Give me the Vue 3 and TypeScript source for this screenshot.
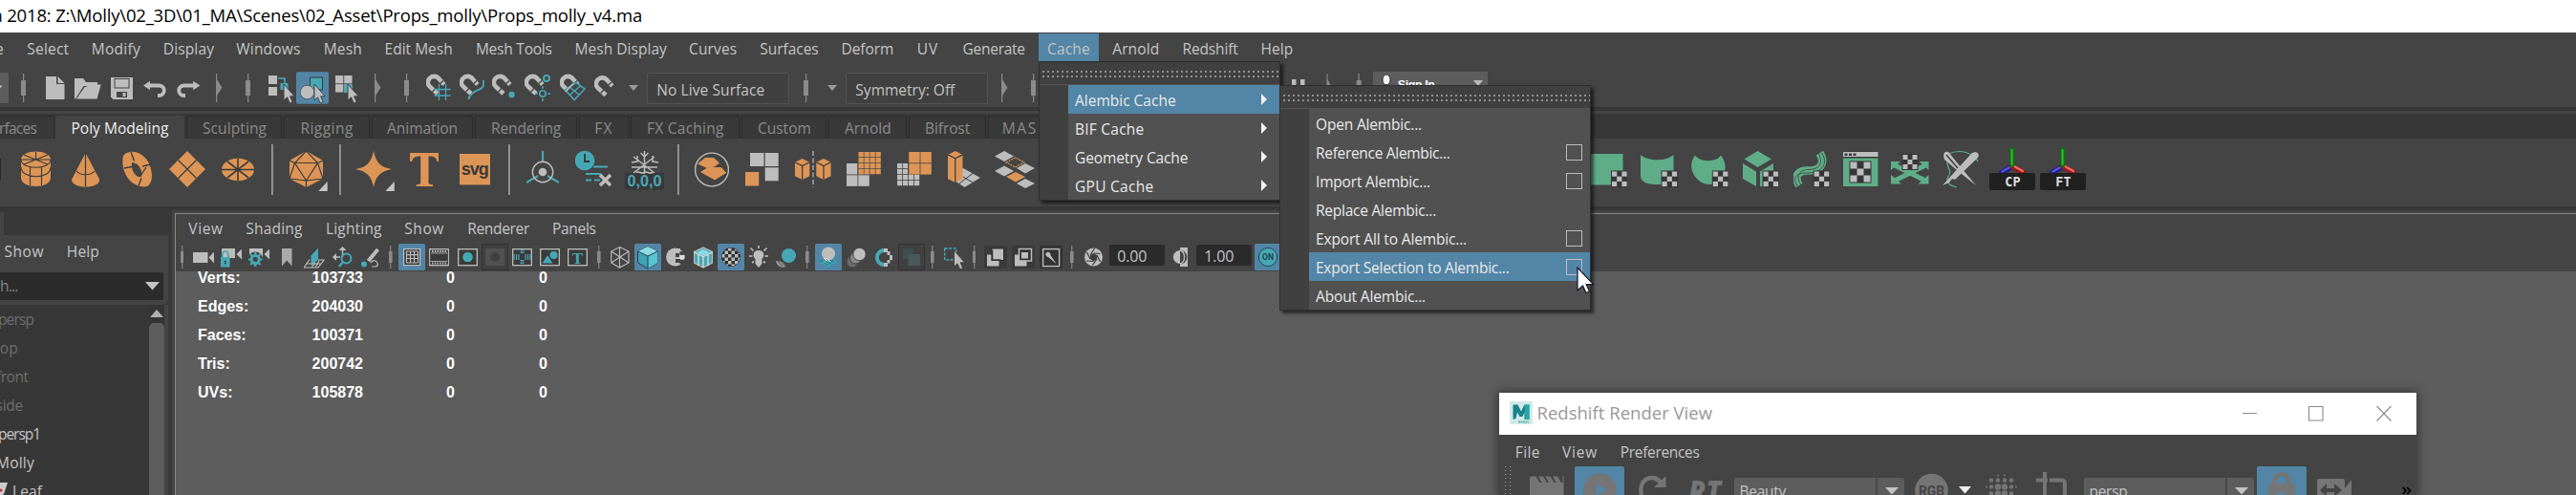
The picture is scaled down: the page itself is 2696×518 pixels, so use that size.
<script setup lang="ts">
type Slot = { id: string; w: number; m: number }

// [name, left edge, right edge] along a row -> widths and leading gaps
function flow(items: [string, number, number][], origin = 0, bleed = 0): Slot[] {
  let end = origin
  return items.map(([id, l, r]) => {
    const left = l - bleed
    const w = r - l + bleed * 2
    const m = left - end
    end = left + w
    return { id, w, m }
  })
}
const box = (s: Slot) => ({ width: s.w + 'px', marginLeft: s.m + 'px' })

// spreads the letters of a label over a given width
const vFit = {
  mounted(el: HTMLElement, b: { value: number }) {
    const n = (el.textContent ?? '').length
    const natural = el.getBoundingClientRect().width
    if (n) el.style.letterSpacing = (b.value - natural) / n + 'px'
  },
}

const mainMenu = flow([
  ['e', -4, 3.8], ['Select', 29.3, 71.3], ['Modify', 96.8, 146], ['Display', 171.8, 223.1], ['Windows', 248.3, 313.7],
  ['Mesh', 339.9, 377.8], ['Edit Mesh', 403.6, 472.8], ['Mesh Tools', 499, 576.8], ['Mesh Display', 602.7, 697],
  ['Curves', 722.2, 770.4], ['Surfaces', 796.5, 855.8], ['Deform', 881.6, 934.6], ['UV', 960.8, 981.5],
  ['Generate', 1008.7, 1072], ['Cache', 1097.2, 1140], ['Arnold', 1165.4, 1212.6], ['Redshift', 1238.7, 1294.9],
  ['Help', 1320.7, 1352.7],
], 0, 1)

const panelMenu = flow([
  ['View', 198.3, 232.7], ['Shading', 258.3, 315.7], ['Lighting', 342, 398.7], ['Show', 424.3, 464],
  ['Renderer', 490.3, 553], ['Panels', 579, 622.7],
], 184, 1)

const renderMenu = flow([['File', 1586.8, 1611], ['View', 1636, 1671], ['Preferences', 1696.8, 1777.5]], 1569, 1)
const outlinerMenu = flow([['Show', 5.4, 45.2], ['Help', 70.8, 103]], 0, 1)

const tabs = [
  { t: 'rfaces', l: -2, r: 56.8, w: 39 }, { t: 'Poly Modeling', l: 57.9, r: 193, w: 102, on: true },
  { t: 'Sculpting', l: 195.5, r: 295.5, w: 67 }, { t: 'Rigging', l: 297.5, r: 386.8, w: 55.5 },
  { t: 'Animation', l: 388.8, r: 495.4, w: 74 }, { t: 'Rendering', l: 497.5, r: 603.7, w: 73 },
  { t: 'FX', l: 605.8, r: 658.3, w: 19.5 }, { t: 'FX Caching', l: 660.4, r: 774.4, w: 80.5 },
  { t: 'Custom', l: 776.5, r: 865.4, w: 56 }, { t: 'Arnold', l: 867.5, r: 949.5, w: 49 },
  { t: 'Bifrost', l: 951.5, r: 1031.8, w: 47 }, { t: 'MASH', l: 1033.8, r: 1114, w: 50 },
].map((t, i, a) => ({ ...t, style: { width: t.r - t.l + 'px', marginLeft: t.l - (i ? a[i - 1].r : 0) + 'px' } }))

const cacheMenu: [string, number][] = [['Alembic Cache', 105.6], ['BIF Cache', 72.5], ['Geometry Cache', 118.3], ['GPU Cache', 82.5]]
const alembicMenu: [string, number, boolean][] = [
  ['Open Alembic...', 111, false], ['Reference Alembic...', 140.5, true], ['Import Alembic...', 120, true],
  ['Replace Alembic...', 126, false], ['Export All to Alembic...', 158, true],
  ['Export Selection to Alembic...', 202.5, true], ['About Alembic...', 115, false],
]

const hud = [['Verts:', '103733'], ['Edges:', '204030'], ['Faces:', '100371'], ['Tris:', '200742'], ['UVs:', '105878']]

const tree: [string, number, number, boolean][] = [
  ['persp', -2, 37, true], ['top', -6, 25, true], ['front', -4, 33.5, true], ['side', -4.5, 28.5, true],
  ['persp1', -2, 44, false], ['Molly', -4, 40, false], ['Leaf', 13, 31, false],
]

const O = '#dc9556', G = '#bdbdbd', T = '#47a8b5', N = '#5fad88', D = '#3a3a3a', K = '#444444'

const rect = (x: number, y: number, w: number, h: number, f = G, extra = '') =>
  `<rect x="${x}" y="${y}" width="${w}" height="${h}" fill="${f}" ${extra}/>`
const path = (d: string, f = G, extra = '') => `<path d="${d}" fill="${f}" ${extra}/>`
const line = (d: string, c = G, w = 1, extra = '') =>
  `<path d="${d}" fill="none" stroke="${c}" stroke-width="${w}" ${extra}/>`
const disc = (x: number, y: number, r: number, f = G, extra = '') => `<circle cx="${x}" cy="${y}" r="${r}" fill="${f}" ${extra}/>`
const ring = (x: number, y: number, r: number, c = G, w = 1) => disc(x, y, r, 'none', `stroke="${c}" stroke-width="${w}"`)

function checker(x: number, y: number, n: number, s: number) {
  let out = rect(x - 1, y - 1, n * s + 2, n * s + 2, '#363636')
  for (let i = 0; i < n; i++) for (let j = 0; j < n; j++) if ((i + j) % 2 === 0) out += rect(x + i * s, y + j * s, s, s)
  return out
}
function cells(x: number, y: number, n: number, pitch: number, size: number, f: string) {
  let out = ''
  for (let i = 0; i < n; i++) for (let j = 0; j < n; j++) out += rect(x + i * pitch, y + j * pitch, size, size, f)
  return out
}
const pointer = (x: number, y: number, dark = '#444') =>
  path(`M${x} ${y}v17l3.6-3.2 2.6 6.2 3-1.3-2.6-5.9h4.6z`, G, `stroke="${dark}" stroke-width="1"`)
const magnet =
  line('M18.8 18.6L14 13C10.5 8.6 6 9.4 3.6 12C.8 15.4 1.6 18.8 4 20.8L12 28', G, 4.6) +
  line('M14.6 17.6L18 14.6M6.6 26L10 22.3', K, 1.3)
const frame = (w: number, inner: string) =>
  rect(0.7, 6.7, w - 1.4, 17, D, `stroke="${G}" stroke-width="1.3"`) + inner
const handle = rect(2, 7, 1.2, 30, '#8b8b8b') + rect(0, 14, 5, 16, '#8b8b8b')
const expander = rect(0, 7, 1.2, 30, '#8b8b8b') + path('M1 13l5.5 8.7L1 30z', '#8b8b8b')
const smallHandle = rect(1.2, 3, 1.1, 24, '#8b8b8b') + rect(0, 9, 3.6, 12, '#8b8b8b')
const blueBox = (w: number) => rect(0, 1, w, 28, '#5285a6', 'rx="1.5"')
const darkBox = rect(0.5, 1.5, 27, 27, '#404040', 'stroke="#333"')
const shelfLine = rect(0, 6, 1.8, 53, '#999')
const corner = (x: number) => path(`M${x} 55h9.4V45z`, '#c4c4c4')
const cube = (x: number, y: number, w: number, h: number, f: string) =>
  path(`M${x} ${y + w / 4}l${w / 2} ${-w / 4} ${w / 2} ${w / 4}v${h - w / 2}l${-w / 2} ${w / 4} ${-w / 2} ${-w / 4}z`, f) +
  line(`M${x} ${y + w / 4}l${w / 2} ${w / 4} ${w / 2} ${-w / 4}M${x + w / 2} ${y + w / 2}v${h - w / 2}`, D, 1.2)
const tripod =
  line('M24 29L13 35.5', '#1c1c8c', 5.5, 'stroke-linecap="round"') + line('M24 28.5L13.5 34.5', '#5656dd', 2.4, 'stroke-linecap="round"') +
  line('M24 29L35.5 35.5', '#98191c', 5.5, 'stroke-linecap="round"') + line('M25 28.5L35 34', '#ee6a68', 2.4, 'stroke-linecap="round"') +
  line('M24 11.5V28', '#0b770b', 4.8, 'stroke-linecap="round"') + line('M23.6 12V27', '#31bb31', 2, 'stroke-linecap="round"') +
  rect(0, 36, 48, 18, '#202020', 'rx="2"')
const camera = (y: number, w: number) => rect(0, y, w, 11) + path(`M22.5 ${y - 1}v13l-6-6.5z`)
const cam2 = rect(1, 6, 14, 10) + path('M22.5 6v12l-6-6z')

const icons: Record<string, string> = {
  handle, expander, smallHandle, shelfLine,
  combo: rect(0, 6, 9, 32, '#5d5d5d', 'rx="1"') + path('M0 19.5h2.5L0 22.5z'),
  newFile: path('M0 10h11v8h8.5v16H0z') + path('M12.5 10l7 7h-7z'),
  open: path('M0 33.5V12h9l3 4h12v4H9.5L1 33.5z') + path('M10.5 21.2l8-2.6h9.2l-4.2 15H2z'),
  save: path('M0 11h23v23H2.5L0 31.5z') + rect(4, 12.5, 15, 9.5, G, 'stroke="#444"') + rect(6, 26, 11, 6, K) + rect(12.5, 27, 3, 4),
  undo: line('M6 19.5H16C24 19.5 23.5 30 16 30H15', G, 3.8) + path('M0 19.5l7-4.8v9.6z'),
  redo: line('M18 19.5H8C0 19.5.5 30 8 30H9', G, 3.8) + path('M24.2 19.5l-7-4.8v9.6z'),
  selHier: rect(0, 9, 9, 9) + rect(0, 21, 9, 9) + line('M10 12h7v6', T, 1.6) + rect(12.5, 17, 8, 7, T) + line('M4 18.5v2', '#222') + pointer(16, 18),
  selObj: rect(0, 5.3, 34, 33.5, '#5285a6', 'rx="2"') + rect(14.5, 11, 13, 13, T, 'stroke="#3a3a3a"') + disc(11.5, 26.5, 7.3, G, 'stroke="#3a4a55" stroke-width=".8"') + pointer(19, 18, '#3a4a55'),
  selComp: cells(0, 9, 2, 9.2, 8.3, G) + rect(9.2, 18.2, 8.4, 8.4, T) + pointer(13, 18),
  snapGrid: magnet + line('M8.5 23.5h17M8.5 30h17M13.5 18v17M20.5 18v17', T, 1.3),
  snapCurve: magnet + line('M25 14v5c-1 6-8 4-12 9-2.5 2-3.5 4-3.5 6', T, 1.8),
  snapPoint: magnet + disc(20.5, 29, 3.2, T),
  snapCenter: magnet + ring(23, 12, 3, T, 2) + ring(19, 28, 3.2, T, 1.6) + line('M19 20v3M19 33v3M11 28h3M24 28h3', T, 1.5),
  snapPlane: magnet + path('M5.5 24L17 16.5 26 23 15 34.5z', K, `stroke="${T}" stroke-width="1.6"`) + line('M10 21l10 8M21.5 20L10.5 29', T, 1.6) + line('M14 17.5L6 26', G, 1.5),
  snapLive: `<g transform="translate(0 1.5)">${magnet}</g>`,
  caret: path('M0 19h10l-5 6z', '#999'),
  // shelf
  sliver: rect(0, 21, 0.8, 22, '#222'),
  cylinder: path('M0 22C0 10.5 31 10.5 31 22V41C31 53 0 53 0 41z', O) + line('M0 22C0 33 31 33 31 22M0 30C0 43 31 43 31 30M15.5 14v8M3 17l25 10M28 17L3 27M0 22h31M9.5 30v19M21.5 30v19', D, 1.1),
  cone: path('M14.5 15L29.3 43C29.3 53 0 53 0 43z', O) + line('M14.5 15v35M5 34c4 5 15 5 19 0', D, 1.2),
  torus: `<path fill-rule="evenodd" d="M1 18C8 10 22 14 28 26C33 38 31 46 27 49.5C18 53 6 46 2 34C0 28 0 22 1 18zM10 25C9 32 13 40 19 40.5C22 38 20 26 10 25z" fill="${O}"/>` + line('M9 14l3.5 9.5M2 31l8-1.5M20 41.5l-3 8M21 29l9-2M19 39l6-9', D, 1.3),
  plane: path('M19 13L38 32 19 51 0 32z', O) + line('M9.5 22.5l19 19M28.5 22.5l-19 19', D, 1.2),
  disc: `<ellipse cx="17" cy="32.5" rx="17" ry="11.8" fill="${O}"/>` + line('M0 32.5h34M6 24l22 17M28 24L6 41M17 21v23', D, 1.6),
  icosa: path('M17.5 13L35 23v19L17.5 51 0 42V23z', O) + line('M5.5 25.5h24L17.5 44zM17.5 13L5.5 25.5 0 42 17.5 44 35 42 29.5 25.5zM0 23l5.5 2.5M35 23l-5.5 2.5M17.5 44v7', D, 1.2) + corner(30.3),
  star: path('M19 13C21.5 25 26 30 38 32 26 34.5 21.5 39 19 51 16.5 39 12 34.5 0 32 12 30 16.5 25 19 13z', O) + corner(31.4),
  type: path('M0 15h30.7v9h-2.2c-1-4-3-5.4-9-5.4V46c0 1.6 1 2 4.5 2.2V50H6.7v-1.8C10 48 11.2 47.6 11.2 46V18.6c-6 0-8 1.4-9 5.4H0z', O),
  svg: rect(0, 16, 32.4, 32.4, O) + `<text x="16.2" y="38" text-anchor="middle" textLength="29" font-family="Liberation Sans, sans-serif" font-weight="700" font-size="18" fill="#3a3a3a">svg</text>`,
  axis: line('M17 13v11M0 46l12-7M34 46l-12-7', T, 2.2) + ring(17, 35, 10.7, G, 1.4) + disc(17, 35, 4.3),
  clock: line('M19 29.5h15M11 37h16M11 43.5h6M20 43.5h6', T, 2) + disc(10, 23, 10.3, T) + line('M10 16v8h5', '#333', 1.8) + line('M26 38l11 11M37 38L26 49', G, 3.6),
  snow: rect(0, 36, 41, 17.5, '#383838') + line('M20.5 13v24M9 19l22 17M31 19L9 36M7 30h27M16.500 15l4 4 4-4M7 25l6-1V18M35 25l-6-1V18M12 35.5c4-2 4 2 8 0s4 2 9 0', G, 1.5) + `<text x="20.5" y="50" text-anchor="middle" textLength="36" lengthAdjust="spacingAndGlyphs" font-family="Liberation Sans, sans-serif" font-weight="700" font-size="17" fill="${T}">0,0,0</text>`,
  combine: ring(18, 32.5, 17.4, G, 1.4) + path('M5 35l9-5.5h14L34 36 21 44z', O, 'stroke="#3a3a3a"') + path('M3 26.5L11 20h9l6 5.500-5 4-8 1.500z', O),
  separate: rect(5, 15, 14.5, 14) + rect(20.7, 15, 14, 14) + rect(20.7, 30.3, 14, 14) + rect(0, 35, 14.2, 14.5, O),
  mirror: cube(0, 21, 15.3, 22, O) + cube(22.3, 21, 15.3, 22, O) + line('M19 13v38', G, 1.2, 'stroke-dasharray="5 2.5"'),
  smooth: cells(0, 26, 2, 12.3, 11.5, G) + rect(11.5, 13, 25, 24.5, K) + cells(12.5, 14, 4, 6, 5.3, O),
  reduce: cells(0, 26, 4, 6, 5.2, G) + rect(11, 13, 26, 24.5, K) + cells(12.2, 14, 2, 12.2, 11.4, O),
  extrude: path('M16 31L34 41 17.5 51 7 44z') + line('M16 40l10 6M26 36.5L12 47', D, 1) + cube(0, 13, 15.5, 33, O),
  multicut: path('M0 18.5l10-5.5 10 5.5-10 5.5zM0 34l10-5.5 10 5.5-10 5.5zM23 31l9-5 10 5-10 5.5zM23 47l9-5 10 5-10 5z') + path('M12 40l10-5 10 5-10 5.5z', O) + line('M12 25l9.5-5 9.5 5-9.5 5z', O, 1.2, 'stroke-dasharray="2 1"'),
  uvPlane: rect(0, 16, 33.5, 32.5, N) + checker(22, 34.5, 3, 5.2),
  uvCyl: path('M0 17C8 24 27 24 34.5 17V48H15C5 48 0 44 0 39z', N) + checker(22.5, 34.5, 3, 5.2),
  uvSphere: path('M4 17.5C9 25 27 25 31 17.5C38 26 36 36 31.5 43C24 50 12 50 5 41C-1.5 33-1 24 4 17.5z', N) + checker(22.8, 34.5, 3, 5.2),
  uvCube: path('M15.5 13L30 21.5 15.5 30 1.5 21.5zM0 26l14 8.5V50L0 42zM18 34.5L32 26v24H18z', N) + checker(21.5, 34.5, 3, 5.2),
  uvCurve: line('M6 49C-1 38 7 33 15 33.500C28 34 34 26 27.500 15', N, 8.5) + line('M7.5 48C1 38 8 32.500 15 32.500C27 32.500 32 26 26 15M4 49.500C-3 39 6 35.500 15 36C30 36 37 26 29.500 15', K, 0.9) + checker(21.7, 34.5, 3, 5.2),
  uvEditor: rect(0, 13.5, 36.5, 36.5, '#363636') + rect(0, 14, 36.5, 5) + rect(1.5, 15.5, 3, 2.5, D) + rect(6, 15.5, 3, 2.5, D) + rect(10.5, 15.5, 3, 2.5, D) + rect(0, 20.5, 36.5, 29.5, N) + checker(7.5, 24.5, 3, 7),
  uvUnfold: line('M4 28l32 16M36 28L4 44', N, 5) + path('M0 24h10l-10 9zM39.5 24h-10l10 9zM0 47.5h11L0 38zM39.500 47.5h-11l11-9.500z', N) + checker(12.5, 17, 3, 5),
  sew: line('M6 16C20 10 33 16 37 24M5 20C3 34 12 30 5 42C4 48 10 50 15 51', N, 1.2) + path('M6 14l5 6L35 49 15 33 2 22C0 16 2 13 6 14zM0 49L30 16c4-4 10-1 7 4L13 43l-3-1-3 4z') + line('M4 17l12 14', D, 1.4),
  cp: tripod + '<text x="24.5" y="50" text-anchor="middle" font-family="DejaVu Sans Mono, monospace" font-weight="700" font-size="13.5" fill="#ddd">CP</text>',
  ft: tripod + '<text x="24.5" y="50" text-anchor="middle" font-family="DejaVu Sans Mono, monospace" font-weight="700" font-size="13.5" fill="#ddd">FT</text>',
  // panel toolbar
  cam: camera(10, 15.5),
  camLock: cam2 + rect(0, 15, 9.5, 10.5, T) + line('M1.8 15v-3c0-4 6-4 6 0v3', T, 1.7) + rect(4, 18.5, 1.5, 4, '#245'),
  camGear: cam2 + disc(7.2, 17.5, 8, K) + ring(7.2, 17.5, 4, T, 3) + line('M7.2 10v15M0 17.5h3M11.5 17.5h3M2 12l2.5 2.5M10 20.5l2.5 2.5M12.5 12L10 14.5M4.5 20.5L2 23', T, 2.2) + disc(7.2, 17.5, 2.4, K),
  bookmark: path('M0 6h10.5v18.5L5.2 18.5 0 24.5z', '#aaa'),
  imgPlane: path('M7.5 13.5L15 5.5V18l-7.5 6z', T) + line('M6 17.5L0 26h15l6-8H15M3 22h15M8 26l4-5M12 26l4-7', G, 1.2),
  pan2d: line('M10.5 6v9M1 15h7', G, 1.5) + path('M10.5 4l4 4h-8zM0 15l4-4v8z') + ring(14.5, 16.5, 5, T, 2) + line('M11 20l-4 5', T, 2.5),
  pencil: line('M17.5 7L7.5 19', G, 4) + disc(3, 22.5, 3, T) + line('M10 21c1-2 3-3 5-2s4 5 0 6h-4', G, 1.2),
  grid: blueBox(28) + rect(5.6, 6.6, 17, 17, D, `stroke="${G}" stroke-width="1.2"`) + line('M8 9h12.5M8 12.7h12.5M8 16.5h12.5M8 21h12.5M8.5 9v12M12.5 9v12M16.5 9v12M20.5 9v12', G, 1.2),
  film: frame(21, rect(1.5, 8, 18, 14, D) + line('M3 9h16M3 21.5h16', G, 2, 'stroke-dasharray="1.5 1.2"') + line('M2 11h17M2 19.5h17', G, 0.8)),
  gate: frame(21, disc(10.5, 15, 5.3, T)),
  gateOff: darkBox + rect(4, 6, 20, 18, '#515151') + disc(14, 15, 5, '#404040'),
  chart: frame(21, line('M10.5 7v5M10.5 18v5', T, 4, 'stroke-dasharray="1.5 1"') + line('M1.5 15h6M13.5 15h6', T, 6, 'stroke-dasharray="1.2 1.2"')),
  safe: frame(21, path('M2.5 21.5L8 13l5.5 8.5z', T) + disc(14.5, 13, 4, T)),
  safeText: frame(21, `<text x="10.5" y="21.5" text-anchor="middle" font-family="Liberation Serif, serif" font-weight="700" font-size="17" fill="${T}">T</text>`),
  wire: line('M9.5 4.5L19 9v12l-9.5 5L.7 21V9zM.7 9l18.3 12M19 9L.7 21M9.5 4.5v21.5', G, 1.1),
  shaded: blueBox(28) + path('M14 4l10.5 5v12L14 27 3.5 21V9z', '#3fa3b5', 'stroke="#2c3c44"') + path('M14 4l10.5 5L14 14 3.5 9z', '#8adbe6') + path('M14 14l10.5-5v12L14 27z', '#55c3d0') + line('M3.5 9L14 14l10.5-5M14 14v13', '#2c3c44', 1),
  halfShade: disc(9.6, 15, 9.5, G) + rect(10, 6, 5, 5, G) + rect(10, 11, 4, 4, K) + rect(14, 13, 5.5, 4, '#ddd') + rect(10, 17, 5, 4, K) + rect(14.5, 9, 4, 4, K) + rect(14.5, 18, 4, 4, K),
  texCube: path('M10 5l9.5 4.5V21L10 26 .5 21V9.5z', T, `stroke="${G}" stroke-width="1.3"`) + path('M10 7l7 3-7 3.5L3 10z', '#8adbe6') + line('M.5 10L10 14.5 19.5 10M10 14.5V26M5 12v12M15 12v12', '#ddd', 1.3),
  texSphere: blueBox(28) + disc(14, 15, 10, '#2e2e2e') + `<clipPath id="ball"><circle cx="14" cy="15" r="9.5"/></clipPath><g clip-path="url(#ball)">` + checker(4, 5, 6, 3.5).replace('#363636', '#2e2e2e') + '</g>',
  bulb: path('M10 8c7 0 6 7 3.5 9v5l-3.5 4-3.500-4v-5C4 15 3 8 10 8z') + line('M10 3v3M1.5 5.5l3 3M18.5 5.5l-3 3M0 14h3.5M16.5 14H20M3 21l2-1.5M17 21l-2-1.5', G, 1.6),
  shadow: disc(13.5, 13.5, 7.5, T) + path('M0 19l7 1 4 5c-5 2-10 0-11-6z', '#999') + line('M2 19l5 6M5 19l5 6', K, 0.8),
  ao: blueBox(28) + path('M4 20l10-6 10 5-9 7z', '#367f95') + disc(14, 11.5, 7, G) + line('M5 20l9 5 9-6M8 18l8 6M12 18l7 4M7 22l7-4M19 17l3 5', T, 1.3) + line('M9 16l3 3M12 16l4 4', '#eee', 1),
  blur: disc(6, 20, 5.5, '#6b6b6b') + disc(9.5, 16, 6, '#8a8a8a', 'stroke="#444"') + disc(13.5, 12, 6.7, G, 'stroke="#444"'),
  aa: path('M9 6C-3 7-3 24 9 25V21C2 20 2 11 9 10z', T) + rect(9, 6, 4, 4) + rect(12.5, 9, 3, 4) + rect(15, 13, 3, 5) + rect(12.5, 18, 3, 3.5) + rect(9, 21, 4, 4),
  depthOff: darkBox + rect(5, 6, 11, 11, '#3d4d50') + rect(10.5, 12, 12.5, 12, '#49595c'),
  isolate: rect(0.7, 6, 12, 12, 'none', `stroke="${T}" stroke-width="1.5" stroke-dasharray="3 1.5"`) + pointer(10.5, 8),
  xray: rect(0, 3, 24, 24, '#3a3a3a') + rect(3, 12.5, 12.5, 12) + rect(8, 6, 12.5, 12.5, G, 'stroke="#2d2d2d" stroke-width="1"') + line('M8.5 8v10h9', '#333', 1.5),
  xray2: rect(0, 3, 24, 24, '#3a3a3a') + rect(3, 12.5, 12.5, 12) + rect(7.5, 6.5, 13, 12.5, '#333', `stroke="${G}" stroke-width="1.5"`) + rect(10, 10, 7, 6.5),
  xray3: rect(0, 3, 24, 24, '#333') + rect(3.6, 6.6, 17, 18, 'none', `stroke="${G}" stroke-width="1.4"`) + path('M7 10.5c2-2 5 0 4.500 2.500L17.5 22 9 15c-2 0-3.500-3-2-4.500z'),
  aperture: disc(9.5, 15, 9.5, G) + path('M9.5 11l3.500 2v4l-3.500 2.500L6 17v-4z', '#3e3e3e') + line('M9.5 11l7 0.500M13 13l3.500 7M13 17l-4.500 6.500M9.500 19.500L2 19M6 17L2.500 10M6 13L10.500 6', '#3e3e3e', 1.2),
  contrast: rect(8, 5, 8, 20, G) + `<ellipse cx="8" cy="15" rx="7.3" ry="7.5" fill="${K}"/>` + path('M8 8C-1.5 9-1.5 21 8 22z') + line('M8 8c6 1 6 13 0 14', G, 1.3),
  on: blueBox(28) + disc(14, 15, 9.6, T, 'stroke="#1f4a52" stroke-width="1"') + '<text x="14" y="18" text-anchor="middle" font-family="Roboto, sans-serif" font-weight="700" font-size="8.5" fill="#1f3f48">ON</text>',
  // render view
  grip: line('M.7 0v30M5.7 0v30', '#aaa', 1, 'stroke-dasharray="1 3"'),
  clap: path('M0 30V13C0 11 1 10.5 2.5 10.5h4l4 6.5h2L9 10.5h5l4 6.5h2l-3.5-6.5h5l4 6.5h2L24 10.5h5l4 6.5h1.5V10.5h1V30z', '#757575'),
  play: rect(0, 0, 52, 32, '#5285a6', 'rx="2"') + disc(26.5, 25, 17.5, '#757575') + path('M22.5 17.5l11 7-11 7z', '#5285a6'),
  refresh: line('M3 30C-1 12 16 7 23 17', '#757575', 4.5) + path('M28.5 10v12H16z', '#757575'),
  rt: '<text x="0" y="38" textLength="34" lengthAdjust="spacingAndGlyphs" font-family="Open Sans, sans-serif" font-style="italic" font-weight="800" font-size="31" fill="#757575">RT</text>',
  rgb: disc(17.5, 25, 17.3, '#757575') + '<text x="17.5" y="30.5" text-anchor="middle" textLength="27" lengthAdjust="spacingAndGlyphs" font-family="Roboto, sans-serif" font-weight="700" font-size="15.5" fill="#444">RGB</text>',
  whiteCaret: path('M0 21h13l-6.5 7.5z', '#eee'),
  dots: [[13, 9.5], [20, 9.5]].map(p => disc(p[0], p[1], 1, '#757575')).join('') +
    [0, 1, 2, 3].flatMap(i => [0, 1, 2].map(j => disc(6 + i * 7, 14.5 + j * 7, j && (i === 1 || i === 2) ? 3.2 : 2.3, '#757575'))).join('') + disc(1, 21.5, 1, '#757575') + disc(32, 21.5, 1, '#757575'),
  crop: line('M0 14.5h12M9 6v24M14 14.5h13a3 3 0 0 1 3 3V30', '#757575', 4),
  lock: rect(0, 0, 52, 32, '#5285a6', 'rx="2"') + line('M18.5 20v-5c0-9 15-9 15 0v5', '#757575', 4.5) + rect(12, 18, 28, 14, '#757575', 'rx="2"') + disc(26, 29.5, 3.2, '#5285a6'),
  camFit: rect(0, 13, 29, 20, '#757575', 'rx="2"') + path('M36 14v16h-7v-7z', '#757575') + path('M3 25l7-7v5h8v-5l8 7-8 7v-5h-8v5z', K),
}

const statusBar = flow([
  ['combo', 0, 9], ['handle', 22, 27], ['newFile', 48.2, 68], ['open', 78.5, 106.5], ['save', 115.7, 139], ['undo', 150.5, 174.5],
  ['redo', 184.6, 209], ['expander', 226, 233], ['handle', 257, 262], ['selHier', 280.6, 310], ['selObj', 310, 344],
  ['selComp', 351.3, 379], ['expander', 392, 399], ['handle', 423, 428], ['snapGrid', 445.6, 473], ['snapCurve', 480.7, 508],
  ['snapPoint', 515.5, 541], ['snapCenter', 549.6, 578], ['snapPlane', 585.8, 613], ['snapLive', 622, 647], ['caret', 658, 668],
])
const statusTail = flow([['expander', 1048, 1055], ['handle', 1079, 1084]], 1034.5)
const shelf = flow([
  ['sliver', 0, 1], ['cylinder', 21.7, 53], ['cone', 74.7, 104], ['torus', 127.8, 158.8], ['plane', 177, 215], ['disc', 232, 266],
  ['shelfLine', 284.2, 286], ['icosa', 302.7, 343], ['shelfLine', 355.2, 357], ['star', 372, 413], ['type', 428.7, 459.5],
  ['svg', 481, 513.5], ['shelfLine', 532.2, 534], ['axis', 551, 585], ['clock', 602, 640], ['snow', 654, 695], ['shelfLine', 709.2, 711],
  ['combine', 727, 763], ['separate', 780.4, 816], ['mirror', 831.7, 870], ['smooth', 885.7, 923], ['reduce', 938.8, 976],
  ['extrude', 992.5, 1027], ['multicut', 1041, 1085], ['uvPlane', 1665, 1703.5], ['uvCyl', 1717.6, 1756], ['uvSphere', 1770, 1809],
  ['uvCube', 1824.7, 1862.5], ['uvCurve', 1877, 1915], ['uvEditor', 1929, 1966], ['uvUnfold', 1979.7, 2020], ['sew', 2033.5, 2073],
  ['cp', 2082, 2130], ['ft', 2135, 2183],
])
const panelBarA = flow([
  ['smallHandle', 188.7, 192.5], ['cam', 201.7, 224.5], ['camLock', 230.7, 253.5], ['camGear', 259.7, 282.5], ['bookmark', 295, 306],
  ['imgPlane', 318, 340], ['pan2d', 348, 369], ['pencil', 377.7, 397], ['smallHandle', 407, 411], ['grid', 417, 445], ['film', 449.3, 470.3],
  ['gate', 478.7, 499.7], ['gateOff', 504, 532], ['chart', 536.5, 557.5], ['safe', 565.5, 586.5], ['safeText', 594.5, 615.5],
  ['smallHandle', 625, 629], ['wire', 639.5, 659.5], ['shaded', 664, 692], ['halfShade', 697.4, 717], ['texCube', 726.5, 746.5],
  ['texSphere', 751, 779], ['bulb', 784, 804.5], ['shadow', 812, 833.5], ['smallHandle', 843, 847], ['ao', 853, 881], ['blur', 886, 907],
  ['aa', 916, 935], ['depthOff', 940, 968], ['smallHandle', 974, 978], ['isolate', 988.5, 1014], ['smallHandle', 1017.7, 1021.5],
  ['xray', 1030, 1054], ['xray2', 1058.7, 1083], ['xray3', 1088, 1112], ['smallHandle', 1120, 1124], ['aperture', 1135.4, 1155],
], 184)
const renderBarA = flow([['grip', 1575, 1582], ['clap', 1601.4, 1637], ['play', 1648, 1700], ['refresh', 1715, 1744], ['rt', 1766.8, 1803]], 1569)
const renderBarB = flow([['rgb', 2004.5, 2040], ['whiteCaret', 2050, 2063], ['dots', 2078, 2112], ['crop', 2131, 2164]], 1993)
const renderBarC = flow([['lock', 2362, 2414], ['camFit', 2425, 2462]], 2359)
</script>

<template>
  <div class="app">
    <header class="title"><span v-fit="679.5">a 2018: Z:\Molly\02_3D\01_MA\Scenes\02_Asset\Props_molly\Props_molly_v4.ma</span></header>

    <nav class="menubar">
      <div v-for="m in mainMenu" :key="m.id" class="label" :class="{ open: m.id === 'Cache' }" :style="box(m)">
        <span v-fit="m.w">{{ m.id }}</span>
      </div>
    </nav>

    <div class="status">
      <svg v-for="(s, i) in statusBar" :key="i" :style="box(s)" height="42" v-html="icons[s.id]" />
      <div class="field live"><span v-fit="113">No Live Surface</span></div>
      <svg class="gapA" width="5" height="42" v-html="icons.handle" />
      <svg class="gapB" width="10" height="42" v-html="icons.caret" />
      <div class="field sym"><span v-fit="104">Symmetry: Off</span></div>
      <svg v-for="(s, i) in statusTail" :key="'t' + i" :style="box(s)" height="42" v-html="icons[s.id]" />
      <svg class="pause" width="80" height="42">
        <rect x="0" y="13" width="4.5" height="12" fill="#bbb" /><rect x="9" y="13" width="4.5" height="12" fill="#bbb" />
        <path d="M36.5 7v12h4l-3-6v-6z" fill="#8b8b8b" /><path d="M69.5 7h1.2v7h2V21h-5v-7h1.8z" fill="#8b8b8b" />
      </svg>
      <div class="signin">
        <svg width="10" height="16"><ellipse cx="5" cy="5.5" rx="4" ry="5.5" fill="#f4f6ff" stroke="#27272f" /><path d="M2.5 10h5v6h-5z" fill="#445" /></svg>
        <span v-fit="38.5">Sign In</span>
        <svg class="tri" width="10" height="6"><path d="M0 0h10L5 6z" fill="#bbb" /></svg>
      </div>
    </div>

    <div class="groove" />
    <div class="tabs">
      <div v-for="t in tabs" :key="t.t" class="tab" :class="{ on: t.on }" :style="t.style"><span v-fit="t.w">{{ t.t }}</span></div>
    </div>
    <div class="shelf">
      <svg v-for="(s, i) in shelf" :key="i" :style="box(s)" height="71" v-html="icons[s.id]" />
    </div>

    <main class="work">
      <aside class="outliner">
        <div class="stub"><i /></div>
        <div class="omenu">
          <div v-for="m in outlinerMenu" :key="m.id" class="label" :style="box(m)"><span v-fit="m.w">{{ m.id }}</span></div>
        </div>
        <div class="search"><span v-fit="18.5">h...</span><svg width="15" height="9"><path d="M0 0h15L7.5 8.5z" fill="#c4c4c4" /></svg></div>
        <div class="treebox">
          <div class="tree">
            <div v-for="r in tree" :key="r[0]" :class="{ dim: r[3] }">
              <svg v-if="r[0] === 'Leaf'" class="shape" width="9" height="20"><path d="M0 2h8L4 14 0 17z" fill="#ccc" /><circle cx="1" cy="10" r="1.5" fill="#b33" /></svg>
              <span v-fit="r[2]" :style="{ marginLeft: (r[0] === 'Leaf' ? r[1] - 9 : r[1]) + 'px' }">{{ r[0] }}</span>
            </div>
          </div>
          <div class="scroll"><svg width="14" height="8"><path d="M0 8h14L7 0z" fill="#b0b0b0" /></svg><div class="thumb" /></div>
        </div>
      </aside>

      <section class="panel">
        <nav class="pmenu">
          <div v-for="m in panelMenu" :key="m.id" class="label" :style="box(m)"><span v-fit="m.w">{{ m.id }}</span></div>
        </nav>
        <div class="ptools">
          <svg v-for="(s, i) in panelBarA" :key="i" :style="box(s)" height="30" v-html="icons[s.id]" />
          <div class="num n1"><span v-fit="31">0.00</span></div>
          <svg class="gapC" width="17" height="30" v-html="icons.contrast" />
          <div class="num n2"><span v-fit="31">1.00</span></div>
          <svg class="gapD" width="28" height="30" v-html="icons.on" />
        </div>
        <div class="view">
          <div class="hud">
            <div v-for="h in hud" :key="h[0]"><b>{{ h[0] }}</b><b>{{ h[1] }}</b><b>0</b><b>0</b></div>
          </div>
        </div>
      </section>
    </main>

    <section class="render">
      <header>
        <svg width="24" height="24">
          <rect width="24" height="24" fill="#d3e9e8" /><path d="M3.5 3.5h5l3.5 7 3.5-7h5V19h-5v-7.5L13.5 16h-3L8 11.5 6.5 18l-3 1z" fill="#17828a" /><path d="M15.5 3.5h5V19h-4z" fill="#23a9a6" /><path d="M9 21.5h11" stroke="#5db5b5" stroke-width="2" stroke-dasharray="2 .5" />
        </svg>
        <span v-fit="183.5">Redshift Render View</span>
        <svg class="winbtns" width="157" height="18" fill="none" stroke="#8a8a8a" stroke-width="1.1">
          <path d="M0 8.5h15M69.5 1.5h14.5v14.5h-14.5zM140.500 1l15 15.5M155.5 1L140.500 16.5" />
        </svg>
      </header>
      <nav>
        <div v-for="m in renderMenu" :key="m.id" class="label" :style="box(m)"><span v-fit="m.w">{{ m.id }}</span></div>
      </nav>
      <div class="rtools">
        <svg v-for="(s, i) in renderBarA" :key="i" :style="box(s)" height="30" v-html="icons[s.id]" />
        <div class="select first"><span v-fit="48.5">Beauty</span><i><svg width="14" height="8"><path d="M0 0h14L7 7.5z" fill="#c4c4c4" /></svg></i></div>
        <svg v-for="(s, i) in renderBarB" :key="'b' + i" :style="box(s)" height="30" v-html="icons[s.id]" />
        <div class="select second"><span v-fit="40">persp</span><i><svg width="14" height="8"><path d="M0 0h14L7 7.5z" fill="#c4c4c4" /></svg></i></div>
        <svg v-for="(s, i) in renderBarC" :key="'c' + i" :style="box(s)" height="30" v-html="icons[s.id]" />
        <svg class="more" width="10" height="10" fill="none" stroke="#000" stroke-width="1.8"><path d="M.7 1L4 4.5.7 8M5.2 1l3.3 3.5L5.2 8" /></svg>
      </div>
    </section>

    <div class="popup cache">
      <div class="tear" />
      <div class="rows">
        <div v-for="(r, i) in cacheMenu" :key="r[0]" class="row" :class="{ hot: i === 0 }">
          <span v-fit="r[1]">{{ r[0] }}</span><svg width="6" height="12"><path d="M0 0l6 6-6 6z" fill="#f2f2f2" /></svg>
        </div>
      </div>
    </div>
    <div class="popup alembic">
      <div class="tear" />
      <div class="rows">
        <div v-for="(r, i) in alembicMenu" :key="r[0]" class="row" :class="{ hot: i === 5 }">
          <span v-fit="r[1]">{{ r[0] }}</span><i v-if="r[2]" class="opt" />
        </div>
      </div>
    </div>
    <svg class="cursor" width="19" height="29"><path d="M1 1v24l5.5-5 3.5 7.5 3.5-1.500-3.300-7.300h7.300z" fill="#fff" stroke="#111a2c" stroke-width="1.2" /></svg>
  </div>
</template>

<style>
body { margin: 0; overflow: hidden; }
</style>

<style scoped>
.app { position: relative; width: 2696px; height: 518px; overflow: hidden; background: #444; color: #c4c4c4; font: 15.5px/30px "Open Sans", "Noto Sans", sans-serif; display: flex; flex-direction: column; }
.app svg { display: block; flex: none; }
span { display: inline-block; white-space: pre; flex: none; }
.title { height: 34px; flex: none; background: #fff; color: #000; font-size: 18.5px; line-height: 32px; }
.title span { margin-left: -7.5px; }
.menubar { display: flex; height: 36px; padding-top: 1px; box-sizing: border-box; flex: none; line-height: 32px; }
.label { flex: none; white-space: nowrap; height: 29px; }
.label.open { background: #5285a6; box-shadow: -9px 0 #5285a6, 9px 0 #5285a6; }
.status { height: 42px; display: flex; align-items: flex-start; flex: none; }
.field { box-sizing: border-box; height: 33px; width: 149px; margin-top: 5.5px; border: 1px solid #535353; border-radius: 2px; background: #404040; line-height: 34px; padding-left: 9px; flex: none; }
.live { margin-left: 9.5px; }
.gapA { margin-left: 14.5px; }
.gapB { margin-left: 20px; }
.sym { margin-left: 9.5px; }
.pause { margin-left: 268px; }
.signin { margin: 5px 0 0 5px; width: 120px; height: 30px; background: #5d5d5d; display: flex; box-sizing: border-box; padding: 3px 4px 0 9px; font: bold 12.5px/20px "Liberation Sans", sans-serif; color: #fff; }
.signin span { margin: 1px 0 0 7px; }
.signin .tri { margin: 6px 0 0 41px; }
.groove { height: 3px; flex: none; border-top: 4px solid #373737; background: #444; }
.tabs { height: 26px; flex: none; background: #373737; display: flex; padding-top: 2px; box-sizing: border-box; }
.tab { flex: none; box-sizing: border-box; height: 24px; border: 1px solid #2c2c2c; border-bottom: 0; border-radius: 3px 3px 0 0; color: #8b8b8b; text-align: center; line-height: 24px; background: #393939; white-space: nowrap; }
.tab:first-child { text-align: left; }
.tab.on { background: #444; color: #eee; border-color: #444; }
.shelf { height: 71px; flex: none; display: flex; }
.work { flex: 1; display: flex; min-height: 0; border-top: 4px solid #373737; }
.outliner { width: 180px; flex: none; background: #383838; display: flex; flex-direction: column; }
.stub { height: 26px; flex: none; }
.stub i { display: block; width: 4px; height: 24px; margin-top: 2px; background: #444; }
.omenu { display: flex; width: 176px; height: 39px; line-height: 35px; background: #444; flex: none; }
.search { width: 167px; height: 29px; background: #2b2b2b; box-shadow: 0 0 0 5px #444; display: flex; justify-content: space-between; align-items: center; padding-right: 4px; border-radius: 0 2px 2px 0; color: #838383; flex: none; line-height: 31px; position: relative; }
.treebox { width: 172px; flex: 1; margin-top: 5px; border-right: 4px solid #444; background: #373737; display: flex; justify-content: space-between; min-height: 0; }
.tree > div { height: 30px; display: flex; }
.tree .dim { color: #6d6d6d; }
.shape { margin-top: 4px; }
.scroll { width: 16px; padding-top: 5px; display: flex; flex-direction: column; align-items: center; background: #343434; }
.thumb { width: 16px; flex: 1; margin-top: 6px; background: #5d5d5d; border-radius: 5px 5px 0 0; }
.panel { flex: 1; min-width: 0; margin: 3px 0 0 3px; border-left: 1px solid #888; border-top: 1px solid #888; display: flex; flex-direction: column; box-shadow: -3px -3px #444; }
.pmenu { display: flex; height: 30px; line-height: 31px; flex: none; }
.ptools { display: flex; height: 30px; flex: none; }
.num { width: 58px; height: 22px; margin-top: 2px; background: #2b2b2b; border-radius: 2px; line-height: 24px; font-size: 16px; flex: none; }
.num span { margin-left: 8.5px; }
.n1 { margin-left: 6px; }
.gapC { margin-left: 8.5px; }
.n2 { margin-left: 7.5px; }
.gapD { margin-left: 3px; }
.view { flex: 1; background: #5d5d5d; overflow: hidden; }
.hud { margin: -8.5px 0 0 23px; font: bold 16px/30px "Liberation Sans", sans-serif; color: #fff; }
.hud > div { display: grid; grid-template-columns: 90px 83px 96px 97px; }
.hud b + b { text-align: right; }
.render { position: absolute; left: 1569px; top: 411px; width: 960px; height: 107px; background: #444; box-shadow: 0 0 9px 2px rgba(0, 0, 0, .4); display: flex; flex-direction: column; }
.render header { height: 44px; background: #fff; color: #999; display: flex; font-size: 18.5px; line-height: 42px; flex: none; }
.render header svg:first-child { margin: 9px 0 0 11px; }
.render header span { margin-left: 4.5px; }
.render header .winbtns { margin: 13px 25px 0 auto; }
.render nav { display: flex; height: 33px; line-height: 36px; flex: none; }
.rtools { display: flex; height: 30px; overflow: hidden; }
.select { width: 178px; height: 30px; margin-top: 12px; background: #5d5d5d; border-radius: 2px; line-height: 28px; display: flex; justify-content: space-between; flex: none; }
.select span { margin-left: 5.5px; }
.select i { width: 30px; border-left: 2px solid #494949; box-sizing: border-box; padding: 10px 0 0 8px; }
.first { margin-left: 12px; }
.second { margin-left: 17px; }
.more { margin: 21px 0 0 52.5px; }
.popup { position: absolute; box-sizing: border-box; border: 1px solid #2f2f2f; background: #404040; box-shadow: 3px 3px 3px rgba(0, 0, 0, .55); color: #e9e9e9; }
.cache { left: 1087px; top: 64px; width: 253px; height: 146px; }
.alembic { left: 1339px; top: 89px; width: 326px; height: 236px; }
.tear { height: 23px; border-bottom: 1px solid #555; background: repeating-linear-gradient(90deg, #404040 0 3px, transparent 3px 5px), linear-gradient(#404040 0 9px, #909090 9px 11px, #404040 11px 14px, #909090 14px 16px, #404040 16px); }
.rows { margin-left: 30px; background: #515151; }
.row { height: 30px; line-height: 32px; padding-left: 7px; display: flex; justify-content: space-between; }
.row.hot { background: #5285a6; }
.row svg { margin: 9px 13px 0 0; }
.opt { box-sizing: border-box; width: 17px; height: 17px; margin: 7px 8px 0 0; border: 1px solid #bdbdbd; }
.cursor { position: absolute; left: 1650px; top: 279px; }
</style>
